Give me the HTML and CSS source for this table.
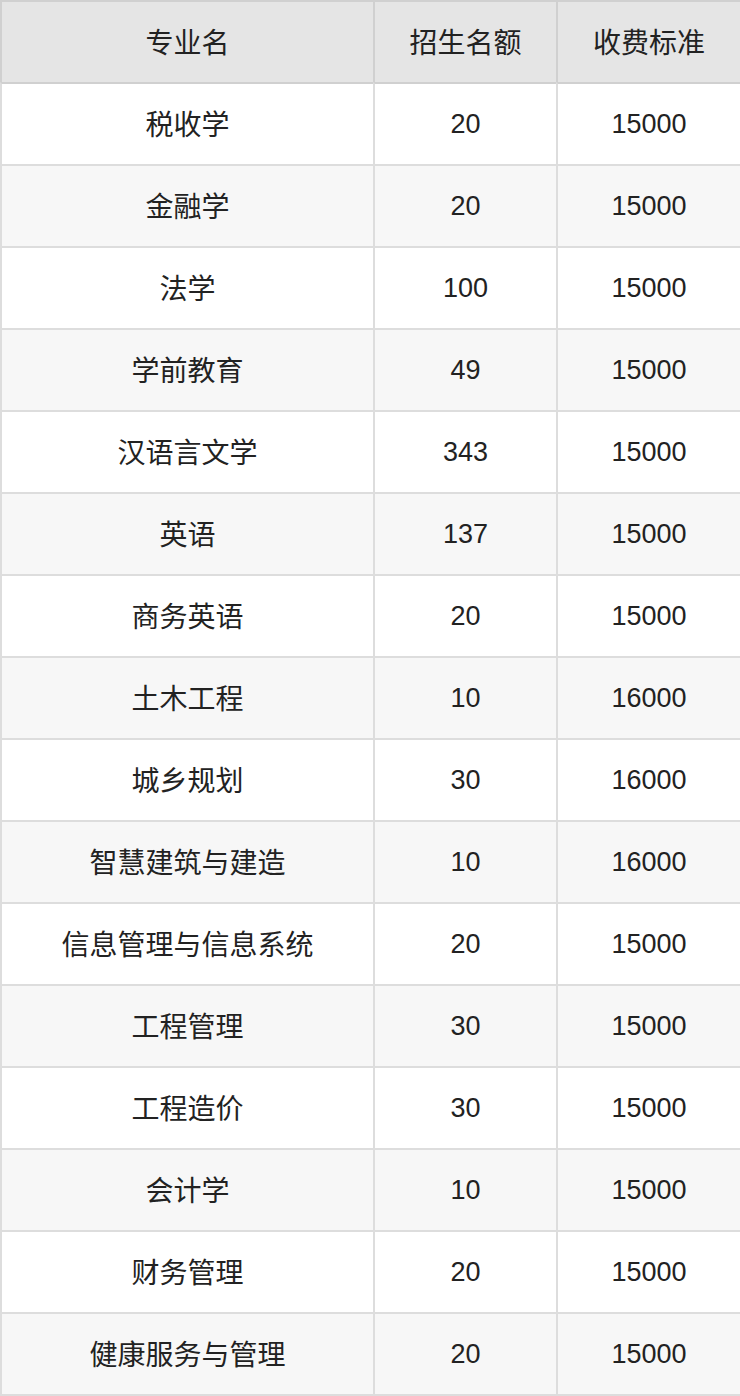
FILE: index.html
```html
<!DOCTYPE html>
<html lang="zh-CN">
<head>
<meta charset="utf-8">
<title>专业招生</title>
<link rel="stylesheet" href="styles.css">
</head>
<body>
<table class="tbl">
  <colgroup>
    <col class="c1"><col class="c2"><col class="c3">
  </colgroup>
  <thead>
    <tr><th>专业名</th><th>招生名额</th><th>收费标准</th></tr>
  </thead>
  <tbody>
    <tr><td class="zh">税收学</td><td class="num">20</td><td class="num">15000</td></tr>
    <tr><td class="zh">金融学</td><td class="num">20</td><td class="num">15000</td></tr>
    <tr><td class="zh">法学</td><td class="num">100</td><td class="num">15000</td></tr>
    <tr><td class="zh">学前教育</td><td class="num">49</td><td class="num">15000</td></tr>
    <tr><td class="zh">汉语言文学</td><td class="num">343</td><td class="num">15000</td></tr>
    <tr><td class="zh">英语</td><td class="num">137</td><td class="num">15000</td></tr>
    <tr><td class="zh">商务英语</td><td class="num">20</td><td class="num">15000</td></tr>
    <tr><td class="zh">土木工程</td><td class="num">10</td><td class="num">16000</td></tr>
    <tr><td class="zh">城乡规划</td><td class="num">30</td><td class="num">16000</td></tr>
    <tr><td class="zh">智慧建筑与建造</td><td class="num">10</td><td class="num">16000</td></tr>
    <tr><td class="zh">信息管理与信息系统</td><td class="num">20</td><td class="num">15000</td></tr>
    <tr><td class="zh">工程管理</td><td class="num">30</td><td class="num">15000</td></tr>
    <tr><td class="zh">工程造价</td><td class="num">30</td><td class="num">15000</td></tr>
    <tr><td class="zh">会计学</td><td class="num">10</td><td class="num">15000</td></tr>
    <tr><td class="zh">财务管理</td><td class="num">20</td><td class="num">15000</td></tr>
    <tr><td class="zh">健康服务与管理</td><td class="num">20</td><td class="num">15000</td></tr>
  </tbody>
</table>
</body>
</html>
```

FILE: styles.css
```css
html, body {
  margin: 0;
  padding: 0;
  background: #ffffff;
  overflow: hidden;
}
.tbl {
  width: 740px;
  table-layout: fixed;
  border-collapse: separate;
  border-spacing: 0;
  border-bottom: 2px solid #dddddd;
  color: #222222;
  font-family: "Liberation Sans", "Noto Sans CJK SC", sans-serif;
}
.c1 { width: 373px; }
.c2 { width: 183px; }
.c3 { width: 184px; }
.tbl th,
.tbl td {
  box-sizing: border-box;
  height: 82px;
  padding: 0;
  text-align: center;
  vertical-align: middle;
  border-left: 2px solid #dddddd;
  border-top: 2px solid #dddddd;
  font-weight: normal;
}
.tbl th {
  background: #e5e5e5;
  font-size: 28px;
  border-color: #d0d0d0;
  padding-bottom: 2px;
}
.tbl tbody tr:nth-child(even) td {
  background: #f7f7f7;
}
.tbl tbody tr:first-child td {
  border-top-color: #d0d0d0;
}
.tbl .zh {
  font-size: 28px;
  padding-bottom: 2px;
}
.tbl .num {
  font-size: 27px;
}
```
